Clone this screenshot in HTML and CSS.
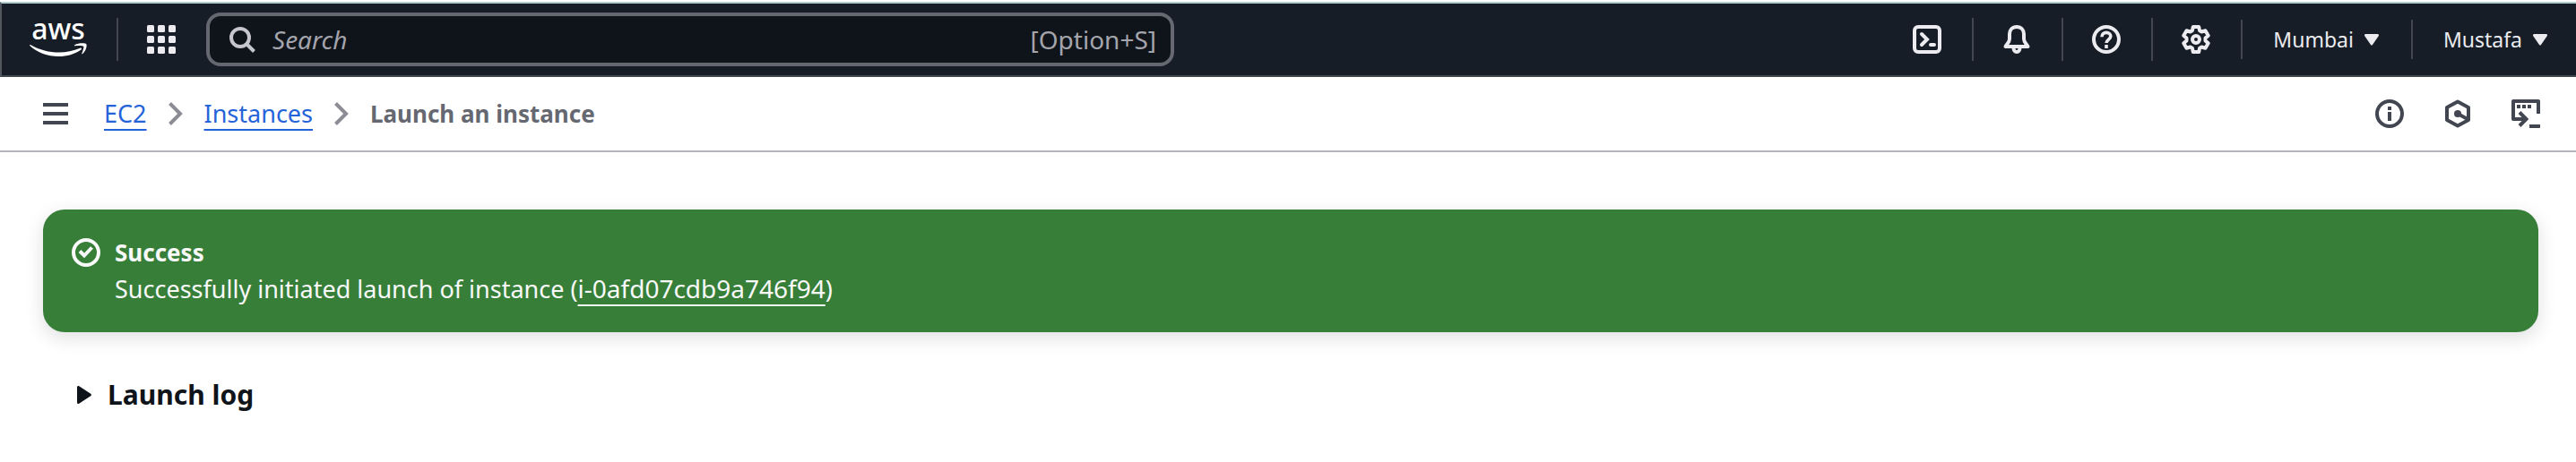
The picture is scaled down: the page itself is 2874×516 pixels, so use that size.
FILE: index.html
```html
<!DOCTYPE html>
<html lang="en">
<head>
<meta charset="utf-8">
<title>Launch an instance | EC2</title>
<link rel="stylesheet" href="styles.css">
</head>
<body>
<header class="topnav">
  <a class="logo" href="#" aria-label="AWS home">
    <svg class="logo-art" viewBox="0 -16 66 80" aria-hidden="true">
      <text class="logo-text" x="33" y="24" text-anchor="middle">aws</text>
      <path fill="#fff" d="M1.500 31.200C.8 30.600 1.400 29.600 2.400 30.200c10 5.600 20.500 8.300 31.500 8.300 8 0 16-1.700 23.500-4.800 1.200-.5 2.200.8 1.100 1.700C51.500 40.400 42.500 43 33.500 43 21 43 9.800 38.800 1.500 31.200z"/>
      <path fill="#fff" d="M51.500 31.300c-.7.100-.8-.6-.2-1 3.500-2.400 12-2.500 13-1.100 1 1.300-.3 7.900-4.100 10.900-.6.500-1.200.2-.9-.4.900-2.200 2.700-6.900 1.900-7.900-.9-1.100-6.500-.8-9.700-.5z"/>
    </svg>
  </a>
  <button class="nav-btn services" type="button" aria-label="Services">
    <svg class="icon" viewBox="0 0 32 32" fill="currentColor">
      <rect width="8" height="8" rx="1.500"/><rect x="12" width="8" height="8" rx="1.500"/><rect x="24" width="8" height="8" rx="1.500"/>
      <rect y="12" width="8" height="8" rx="1.500"/><rect x="12" y="12" width="8" height="8" rx="1.500"/><rect x="24" y="12" width="8" height="8" rx="1.500"/>
      <rect y="24" width="8" height="8" rx="1.500"/><rect x="12" y="24" width="8" height="8" rx="1.500"/><rect x="24" y="24" width="8" height="8" rx="1.500"/>
    </svg>
  </button>
  <label class="search">
    <svg class="icon search-icon" viewBox="0 0 32 32" fill="none" stroke="currentColor" stroke-width="4">
      <circle cx="14" cy="14" r="10"/><path d="M21 21l8.500 8.500"/>
    </svg>
    <input class="search-input" type="text" placeholder="Search" aria-label="Search">
    <span class="shortcut">[Option+S]</span>
  </label>
  <nav class="tools" aria-label="Account tools">
    <button class="nav-btn tool" type="button" aria-label="CloudShell">
      <svg class="icon" viewBox="0 0 32 32" fill="none" stroke="currentColor" stroke-width="4" stroke-linecap="round">
        <rect x="2" y="2" width="28" height="28" rx="4"/><path d="M10 10l6 6-6 6M20 22h4"/>
      </svg>
    </button>
    <button class="nav-btn tool" type="button" aria-label="Notifications">
      <svg class="icon" viewBox="0 0 32 32" fill="none" stroke="currentColor" stroke-width="4" stroke-linejoin="round">
        <path d="M16 2C11 2 8 5.500 8 10v5.500C8 19 5.500 20.500 3.500 24h25C26.500 20.500 24 19 24 15.500V10c0-4.500-3-8-8-8z"/>
        <path d="M12.500 25.500c0 2.500 1.500 4.500 3.500 4.500s3.500-2 3.500-4.500"/>
      </svg>
    </button>
    <button class="nav-btn tool" type="button" aria-label="Help">
      <svg class="icon" viewBox="0 0 32 32" fill="none" stroke="currentColor" stroke-width="4">
        <circle cx="16" cy="16" r="14"/><path stroke-width="3.600" d="M11 13.200c0-3 2.200-4.800 5-4.800s4.800 1.600 4.800 4.200c0 3.200-4.800 3.800-4.800 7.400M16 22v4"/>
      </svg>
    </button>
    <button class="nav-btn tool" type="button" aria-label="Settings">
      <svg class="icon" viewBox="0 0 32 32" fill="none" stroke="currentColor" stroke-width="4" stroke-linejoin="round">
        <path d="M12.800 2h6.400l.9 4.200 2.300 1.300 4.100-1.300 3.200 5.500-3.200 2.900v2.800l3.200 2.900-3.200 5.500-4.100-1.300-2.300 1.300-.9 4.200h-6.400l-.9-4.200-2.300-1.300-4.100 1.300-3.200-5.500 3.200-2.900v-2.800l-3.200-2.900 3.200-5.500 4.100 1.300 2.300-1.300z"/>
        <circle cx="16" cy="16" r="4"/>
      </svg>
    </button>
    <button class="nav-btn menu" type="button">Mumbai
      <svg class="caret" viewBox="0 0 16 13" fill="currentColor"><path d="M1.500 0h13c1.300 0 1.900 1.200 1.200 2.200L9 12c-.5.800-1.500.8-2 0L.3 2.200C-.4 1.200.2 0 1.500 0z"/></svg>
    </button>
    <button class="nav-btn menu" type="button">Mustafa
      <svg class="caret" viewBox="0 0 16 13" fill="currentColor"><path d="M1.500 0h13c1.300 0 1.900 1.200 1.200 2.200L9 12c-.5.800-1.500.8-2 0L.3 2.200C-.4 1.200.2 0 1.500 0z"/></svg>
    </button>
  </nav>
</header>

<div class="crumb-bar">
  <button class="plain-btn" type="button" aria-label="Open navigation">
    <svg class="burger" viewBox="0 0 28 24" fill="currentColor"><rect width="28" height="4"/><rect y="10" width="28" height="4"/><rect y="20" width="28" height="4"/></svg>
  </button>
  <nav class="crumbs" aria-label="Breadcrumbs">
    <a class="crumb" href="#">EC2</a>
    <svg class="chevron" viewBox="0 0 16 26" fill="none" stroke="currentColor" stroke-width="4"><path d="M1.500 1.500L13 13 1.500 24.500"/></svg>
    <a class="crumb" href="#">Instances</a>
    <svg class="chevron" viewBox="0 0 16 26" fill="none" stroke="currentColor" stroke-width="4"><path d="M1.500 1.500L13 13 1.500 24.500"/></svg>
    <span class="crumb-current" aria-current="page">Launch an instance</span>
  </nav>
  <div class="panel-tools">
    <button class="plain-btn" type="button" aria-label="Info">
      <svg class="icon" viewBox="0 0 32 32" fill="none" stroke="currentColor" stroke-width="4"><circle cx="16" cy="16" r="14"/><path d="M16 8v4M16 14v10"/></svg>
    </button>
    <button class="plain-btn" type="button" aria-label="Tutorials">
      <svg class="icon" viewBox="0 0 32 32" fill="none" stroke="currentColor" stroke-width="4" stroke-linejoin="round"><path d="M16 2.500L28 9v14l-12 6.500L4 23V9z"/><path d="M16 16l11 6"/><circle cx="16" cy="16" r="4" fill="currentColor" stroke="none"/></svg>
    </button>
    <button class="plain-btn" type="button" aria-label="Open CloudShell panel">
      <svg class="icon" viewBox="0 0 32 32" fill="none" stroke="currentColor" stroke-width="4"><path stroke-linejoin="round" d="M30 16V2H2v20h14"/><path d="M9 14.500l7.500 7.500L9 29.500M20 30h12M6 8h4M12 8h4M18 8h4"/></svg>
    </button>
  </div>
</div>

<main class="content">
  <section class="flash" role="status">
    <svg class="icon flash-icon" viewBox="0 0 32 32" fill="none" stroke="currentColor" stroke-width="4"><circle cx="16" cy="16" r="14"/><path d="M9 14.500l5 5 8.500-9"/></svg>
    <div class="flash-body">
      <div class="flash-title">Success</div>
      <div class="flash-text">Successfully initiated launch of instance (<a class="flash-link" href="#">i-0afd07cdb9a746f94</a>)</div>
    </div>
  </section>
  <details class="log">
    <summary class="log-title">
      <svg class="log-caret" viewBox="0 0 16 20" fill="currentColor"><path d="M0 1.500C0 .2 1.200-.4 2.200.3l13 8.500c.9.600.9 1.800 0 2.400l-13 8.500c-1 .7-2.200.1-2.200-1.200z"/></svg>
      <span>Launch log</span>
    </summary>
  </details>
</main>
</body>
</html>
```
FILE: styles.css
```css
* { box-sizing: border-box; }

body {
  margin: 0;
  padding-top: 2px;
  background: #fff;
  color: #0f141a;
  font-family: "Noto Sans", "Open Sans", sans-serif;
  font-size: 26px;
  line-height: 40px;
}

button, input { font: inherit; color: inherit; }

svg { display: block; flex: none; }

.icon { width: 32px; height: 32px; }

.topnav {
  display: flex;
  align-items: center;
  height: 84px;
  padding-right: 32px;
  background: #161d26;
  border-top: 2px solid #b0cccf;
  border-bottom: 2px solid #424650;
  border-left: 2px solid #52575e;
  color: #ebebf0;
}

.logo {
  display: flex;
  align-items: center;
  height: 48px;
  padding: 0 32px 0 30px;
  border-right: 2px solid #424650;
}

.logo-art { width: 66px; height: 80px; }

.logo-text {
  fill: #fff;
  font-family: "Noto Sans", sans-serif;
  font-size: 32px;
  font-weight: 500;
}

.nav-btn, .plain-btn {
  display: flex;
  align-items: center;
  padding: 0;
  border: 0;
  background: none;
}

.services { padding: 0 34px 0 32px; }

.search {
  display: flex;
  flex: 0 1 1080px;
  align-items: center;
  height: 60px;
  padding: 0 16px 0 20px;
  border: 4px solid #656871;
  border-radius: 16px;
  background: #0f141a;
  color: #a4a4ad;
  font-size: 28px;
}

.search-icon { color: #c6c6cd; }

.search-input {
  flex: 1;
  min-width: 0;
  margin-left: 18px;
  padding: 0;
  border: 0;
  outline: 0;
  background: none;
}

.search-input::placeholder {
  color: #a4a4ad;
  font-style: italic;
  opacity: 1;
}

.tools { display: flex; align-items: center; margin-left: auto; }

.tool { height: 48px; padding: 0 34px 0 32px; }

.tool + .tool, .menu { border-left: 2px solid #424650; }

.menu {
  gap: 12px;
  height: 44px;
  padding-left: 34px;
  font-size: 23px;
}

.menu:not(:last-child) { padding-right: 36px; }

.caret { width: 16px; height: 13px; }

.crumb-bar {
  display: flex;
  align-items: center;
  height: 84px;
  padding: 0 40px 0 48px;
  border-bottom: 2px solid #b4b4bb;
  color: #424650;
}

.burger { width: 28px; height: 24px; }

.crumbs {
  display: flex;
  align-items: center;
  gap: 24px;
  margin-left: 40px;
}

.crumb {
  color: #2563d9;
  font-size: 27px;
  text-decoration-thickness: 2px;
  text-underline-offset: 7px;
}

.chevron { width: 16px; height: 26px; color: #8c8c94; }

.crumb-current { color: #656871; font-weight: 700; }

.panel-tools { display: flex; gap: 44px; margin-left: auto; }

.content { padding: 64px 42px 64px 48px; }

.flash {
  display: flex;
  gap: 16px;
  padding: 28px 32px;
  border-radius: 24px;
  background: #377f39;
  box-shadow: 0 6px 20px 1px rgba(0, 7, 22, 0.12);
  color: #f9f9fa;
}

.flash-icon { margin-top: 4px; }

.flash-title { font-weight: 700; }

.flash-text { font-size: 27px; }

.flash-link {
  color: inherit;
  font-size: 28px;
  text-decoration-thickness: 2px;
  text-underline-offset: 7px;
}

.log { margin-top: 50px; padding-left: 38px; }

.log-title {
  display: flex;
  align-items: center;
  gap: 18px;
  font-size: 30px;
  font-weight: 700;
  list-style: none;
}

.log-caret { width: 16px; height: 20px; }
```
